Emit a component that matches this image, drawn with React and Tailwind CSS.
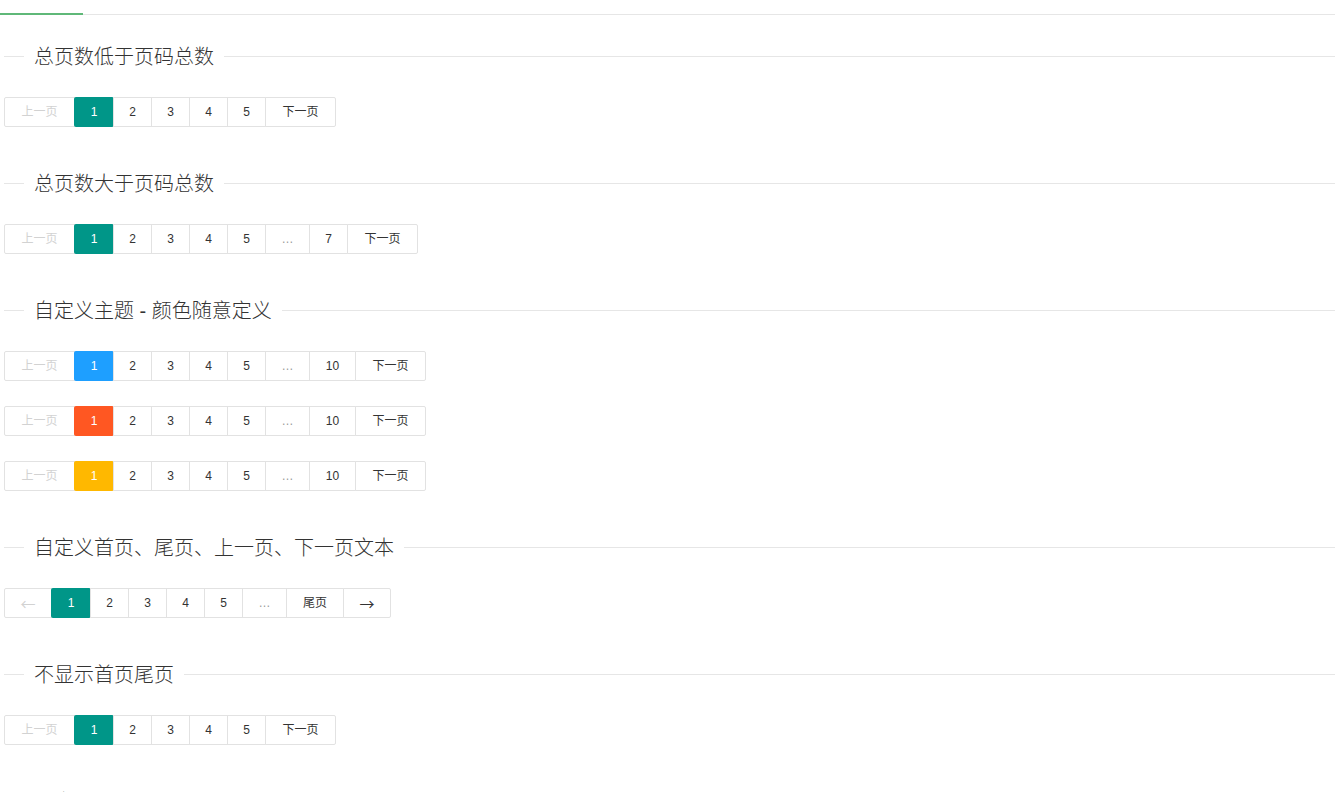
import React from "react";

const FONT = { fontFamily: '"Liberation Sans", "Noto Sans CJK SC", sans-serif' };

function Legend({ children }) {
  return (
    <div className="flex items-center h-[20px]">
      <div className="w-[20px] h-px bg-[#e6e6e6]" />
      <div
        className="px-[10px] mt-[2px] text-[20px] leading-[20px] font-light text-[#333] whitespace-nowrap"
        style={{ fontFamily: '"Liberation Sans", "Noto Sans CJK SC", sans-serif' }}
      >
        {children}
      </div>
      <div className="flex-1 h-px bg-[#e6e6e6]" />
    </div>
  );
}

function Item({ w, label, kind, curr, arrow }) {
  const color =
    kind === "disabled" ? "text-[#d2d2d2]" : kind === "spr" ? "text-[#999]" : "text-[#333]";
  return (
    <div
      className={`relative h-[30px] flex items-center justify-center border border-[#e2e2e2] -mr-px text-[12px] bg-white ${color} ${w}`}
    >
      {curr ? (
        <div className={`absolute -left-px -top-px -right-px -bottom-px rounded-[2px] ${curr} flex items-center justify-center text-white`}>
          {label}
        </div>
      ) : arrow ? (
        <span
          className="text-[15px] leading-none"
          style={{ fontFamily: '"Noto Sans CJK SC", sans-serif' }}
        >
          {label}
        </span>
      ) : (
        label
      )}
    </div>
  );
}

function Pager({ items }) {
  return (
    <div className="flex rounded-[2px]" style={FONT}>
      {items}
    </div>
  );
}

function Standard({ last, extra, currCls = "bg-[#009688]" }) {
  return (
    <Pager
      items={
        <>
          <Item w="w-[71px] rounded-l-[2px]" label="上一页" kind="disabled" />
          <Item w="w-[40px]" label="1" curr={currCls} />
          <Item w="w-[39px]" label="2" />
          <Item w="w-[39px]" label="3" />
          <Item w="w-[39px]" label="4" />
          <Item w="w-[39px]" label="5" />
          {extra ? (
            <>
              <Item w="w-[45px]" label="…" kind="spr" />
              <Item w={last === "7" ? "w-[39px]" : "w-[47px]"} label={last} />
            </>
          ) : null}
          <Item w="w-[71px] rounded-r-[2px]" label="下一页" />
        </>
      }
    />
  );
}

export default function App() {
  return (
    <div className="bg-white min-h-[792px] overflow-hidden">
      <div className="relative h-[15px] border-b border-[#e6e6e6]">
        <div className="absolute left-0 -bottom-px w-[83px] h-[2px] bg-[#5FB878]" />
      </div>
      <div className="pl-[4px]">
        <div className="mt-[31px]">
          <Legend>总页数低于页码总数</Legend>
        </div>
        <div className="mt-[31px]">
          <Standard />
        </div>

        <div className="mt-[46px]">
          <Legend>总页数大于页码总数</Legend>
        </div>
        <div className="mt-[31px]">
          <Standard extra last="7" />
        </div>

        <div className="mt-[46px]">
          <Legend>自定义主题 - 颜色随意定义</Legend>
        </div>
        <div className="mt-[31px] flex flex-col gap-[25px]">
          <Standard extra last="10" currCls="bg-[#1E9FFF]" />
          <Standard extra last="10" currCls="bg-[#FF5722]" />
          <Standard extra last="10" currCls="bg-[#FFB800]" />
        </div>

        <div className="mt-[46px]">
          <Legend>自定义首页、尾页、上一页、下一页文本</Legend>
        </div>
        <div className="mt-[31px]">
          <Pager
            items={
              <>
                <Item w="w-[48px] rounded-l-[2px]" label="←" kind="disabled" arrow />
                <Item w="w-[40px]" label="1" curr="bg-[#009688]" />
                <Item w="w-[39px]" label="2" />
                <Item w="w-[39px]" label="3" />
                <Item w="w-[39px]" label="4" />
                <Item w="w-[39px]" label="5" />
                <Item w="w-[45px]" label="…" kind="spr" />
                <Item w="w-[58px]" label="尾页" />
                <Item w="w-[48px] rounded-r-[2px]" label="→" arrow />
              </>
            }
          />
        </div>

        <div className="mt-[46px]">
          <Legend>不显示首页尾页</Legend>
        </div>
        <div className="mt-[31px]">
          <Standard />
        </div>

        <div className="mt-[46px]">
          <Legend>开启HASH</Legend>
        </div>
        <div className="mt-[31px]">
          <Standard />
        </div>
      </div>
    </div>
  );
}
